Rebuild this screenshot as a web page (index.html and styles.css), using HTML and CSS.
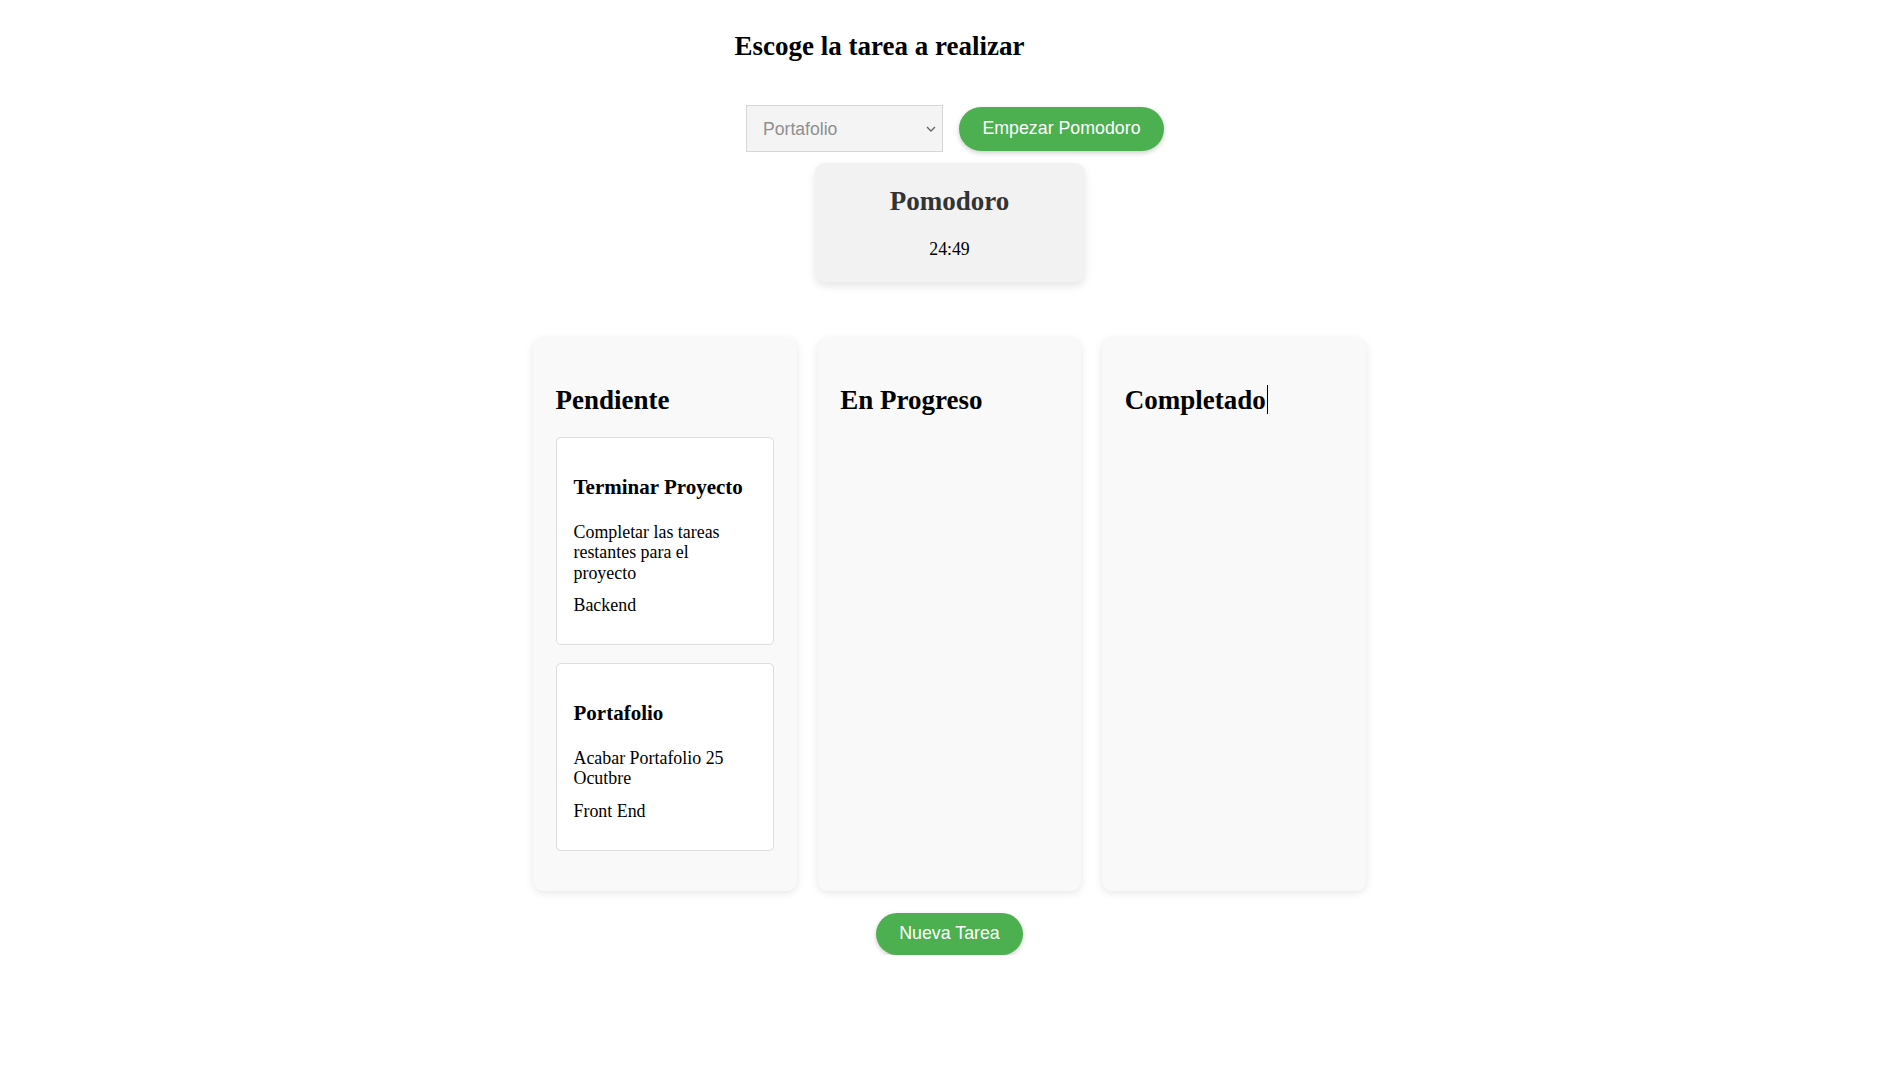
FILE: index.html
```html
<!DOCTYPE html>
<html lang="es">
<head>
<meta charset="utf-8">
<title>Pomodoro Kanban</title>
<link rel="stylesheet" href="styles.css">
</head>
<body>
<div class="app">
  <h2 class="title">Escoge la tarea a realizar</h2>
  <div class="controls">
    <div class="select-wrap">
      <select class="task-select">
        <option>Portafolio</option>
        <option>Terminar Proyecto</option>
      </select>
      <svg class="chevron" width="10" height="6" viewBox="0 0 10 6"><path d="M1 1l4 4 4-4" fill="none" stroke="#666" stroke-width="1.4"/></svg>
    </div>
    <button class="btn btn-start">Empezar Pomodoro</button>
  </div>
  <div class="pomodoro">
    <h2 class="pomodoro-title">Pomodoro</h2>
    <p class="pomodoro-time">24:49</p>
  </div>
  <div class="board">
    <div class="column">
      <h2 class="column-title">Pendiente</h2>
      <div class="task">
        <h3 class="task-title">Terminar Proyecto</h3>
        <p class="task-desc">Completar las tareas restantes para el proyecto</p>
        <p class="task-tag">Backend</p>
      </div>
      <div class="task">
        <h3 class="task-title">Portafolio</h3>
        <p class="task-desc">Acabar Portafolio 25 Ocutbre</p>
        <p class="task-tag">Front End</p>
      </div>
    </div>
    <div class="column">
      <h2 class="column-title">En Progreso</h2>
    </div>
    <div class="column">
      <h2 class="column-title">Completado<span class="caret"></span></h2>
    </div>
  </div>
  <button class="btn btn-new">Nueva Tarea</button>
</div>
</body>
</html>
```
FILE: styles.css
```css
html, body {
  margin: 0;
  padding: 0;
  background: #fff;
}
body {
  font-family: "Liberation Serif", "Times New Roman", serif;
  color: #000;
}
.app {
  display: flex;
  flex-direction: column;
  align-items: center;
}
.title {
  font-size: 27px;
  line-height: 30.3px;
  font-weight: bold;
  margin: 31px 140px 0 0;
}
.controls {
  display: flex;
  align-items: center;
  gap: 16px;
  margin: 44px 0 0 11px;
}
.select-wrap {
  position: relative;
  width: 197px;
  height: 47px;
}
.task-select {
  appearance: none;
  -webkit-appearance: none;
  width: 100%;
  height: 100%;
  box-sizing: border-box;
  border: 1px solid #d6d6d6;
  background: #f4f4f4;
  color: #8f8f8f;
  font-family: "Liberation Sans", Arial, sans-serif;
  font-size: 17.6px;
  padding: 0 16px;
  border-radius: 0;
  outline: none;
}
.chevron {
  position: absolute;
  right: 7px;
  top: 21px;
  pointer-events: none;
}
.btn {
  background: #4caf50;
  color: #fff;
  border: none;
  border-radius: 22px;
  font-family: "Liberation Sans", Arial, sans-serif;
  font-size: 17.8px;
  box-shadow: 0 2px 5px rgba(0, 0, 0, 0.2);
  padding: 0;
  text-align: center;
}
.btn-start {
  width: 205px;
  height: 44px;
}
.pomodoro {
  width: 270px;
  height: 119px;
  box-sizing: border-box;
  margin-top: 11px;
  background: #f2f2f2;
  border-radius: 10px;
  box-shadow: 0 4px 8px rgba(0, 0, 0, 0.1);
  text-align: center;
  padding-top: 1px;
}
.pomodoro-title {
  font-size: 27px;
  line-height: 30.3px;
  color: #333;
  margin: 22px 0 22px;
}
.pomodoro-time {
  font-size: 17.8px;
  line-height: 20.2px;
  margin: 0;
}
.board {
  display: grid;
  grid-template-columns: repeat(3, 1fr);
  gap: 21px;
  width: 833px;
  margin-top: 56px;
}
.column {
  background: #f9f9f9;
  border-radius: 10px;
  box-shadow: 0 2px 8px rgba(0, 0, 0, 0.1);
  padding: 25px 23px 22px 22.5px;
}
.column-title {
  font-size: 27px;
  line-height: 30.3px;
  margin: 21.7px 0 21.7px;
}
.caret {
  display: inline-block;
  width: 1px;
  height: 29px;
  background: #000;
  vertical-align: top;
  margin-left: 1px;
}
.task {
  background: #fff;
  border: 1px solid #ddd;
  border-radius: 5px;
  padding: 16.5px 20px 16.5px 17px;
  margin-bottom: 18px;
}
.task-title {
  font-size: 21px;
  line-height: 23.7px;
  margin: 22px 0 22px;
}
.task-desc {
  font-size: 17.9px;
  line-height: 20.2px;
  margin: 0 0 12.5px;
}
.task-tag {
  font-size: 17.9px;
  line-height: 20.2px;
  margin: 0 0 12px;
}
.btn-new {
  width: 147px;
  height: 42px;
  margin-top: 22px;
  border-radius: 21px;
}
```
